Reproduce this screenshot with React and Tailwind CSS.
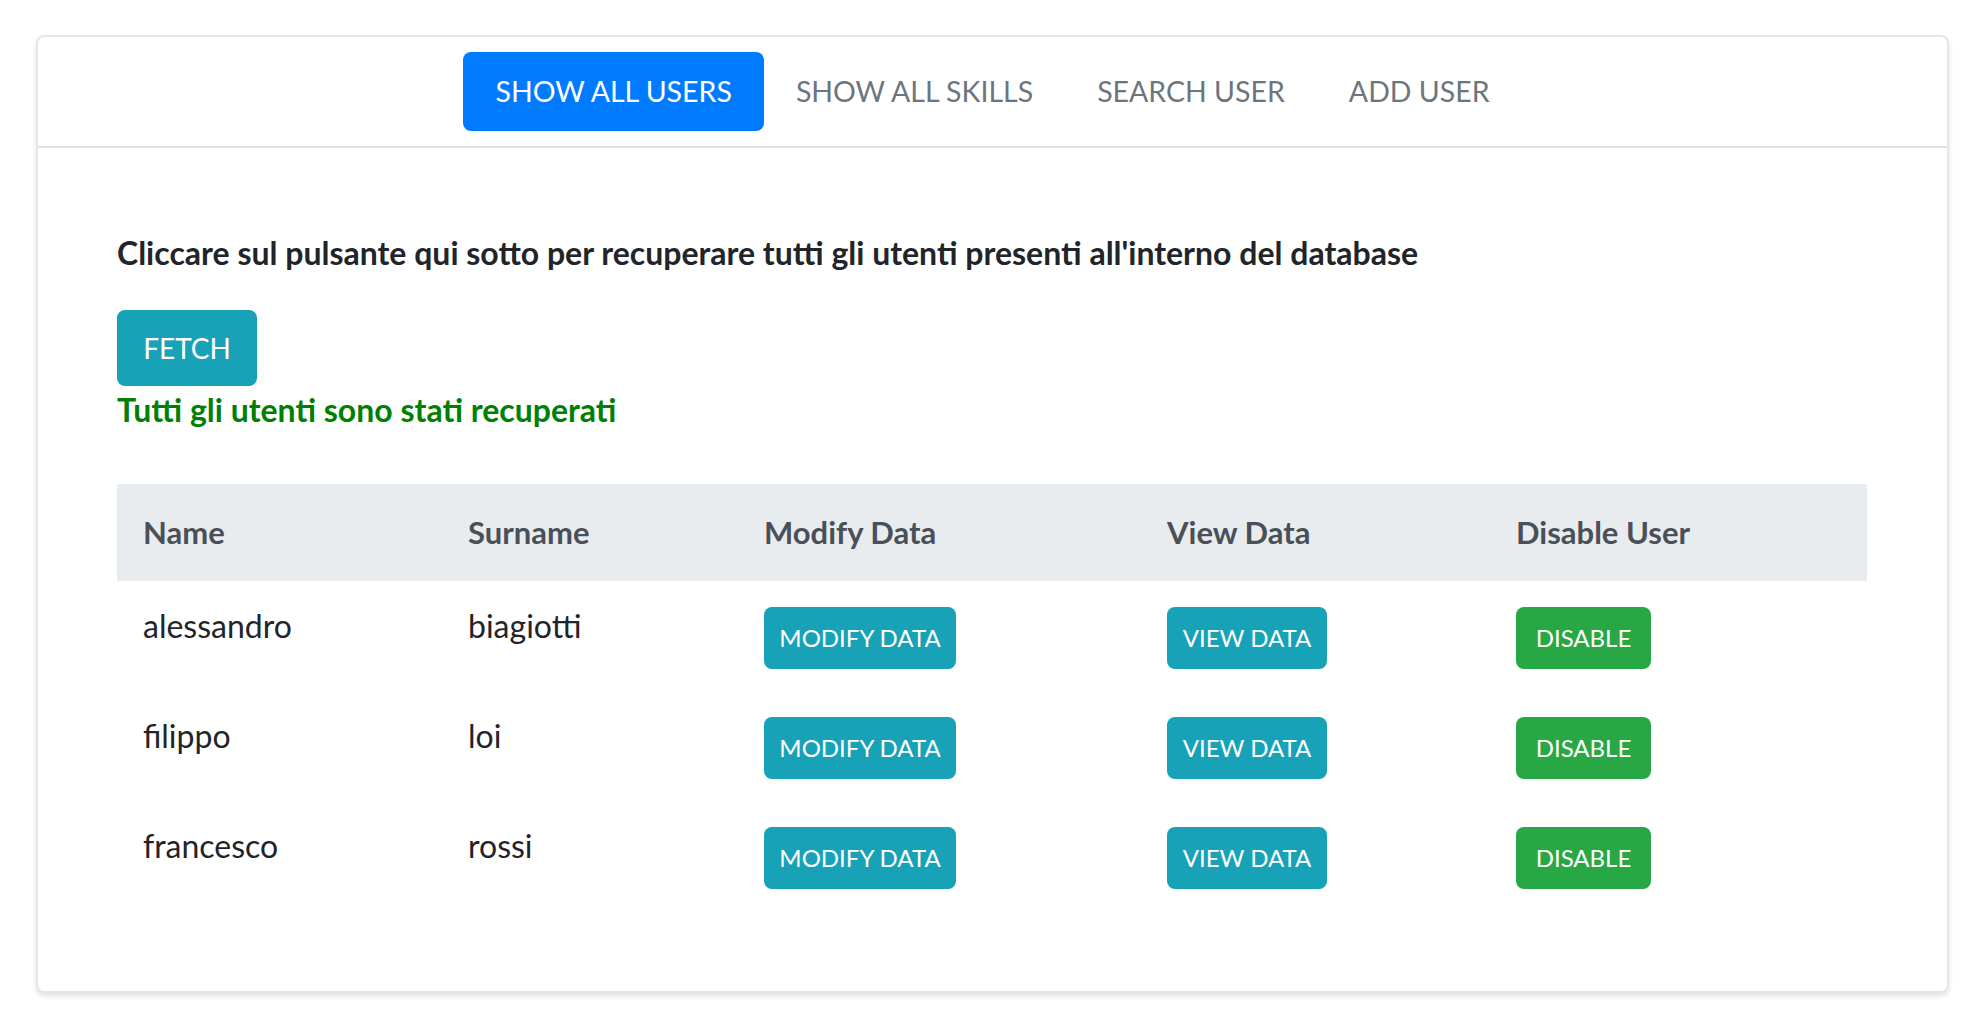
import React from 'react';

const users = [
    { name: 'alessandro', surname: 'biagiotti' },
    { name: 'filippo', surname: 'loi' },
    { name: 'francesco', surname: 'rossi' },
];

const tabs = ['SHOW ALL USERS', 'SHOW ALL SKILLS', 'SEARCH USER', 'ADD USER'];

const App = () => {
    return (
        <div className="w-full min-h-screen bg-white font-['Lato',sans-serif] text-[#212529]">
            <div className="pt-[35px] pl-[36px]">
                <div className="w-[1913px] h-[958px] border-2 border-[#e6e6e6] rounded-[8px] shadow-[0_3px_5px_rgba(0,0,0,0.12)] bg-white">
                    {/* header con i tab */}
                    <div className="flex justify-center pt-[15px] pb-[15px] border-b-2 border-[#dee2e6]">
                        <ul className="flex">
                            {tabs.map((t, i) => (
                                <li
                                    key={t}
                                    className={
                                        i === 0
                                            ? 'h-[79px] px-[32px] flex items-center rounded-[8px] bg-[#007bff] text-white text-[28.5px]'
                                            : 'h-[79px] px-[32px] flex items-center text-[#6c757d] text-[28.5px]'
                                    }
                                >
                                    {t}
                                </li>
                            ))}
                        </ul>
                    </div>

                    {/* corpo */}
                    <div className="pl-[79px] pr-[80px] pt-[81px]">
                        <p className="text-[32px] leading-[48px] font-bold">
                            Cliccare sul pulsante qui sotto per recuperare tutti gli utenti presenti all'interno del database
                        </p>
                        <button className="mt-[33px] h-[76px] w-[140px] rounded-[8px] bg-[#17a2b8] text-white text-[28px]">
                            FETCH
                        </button>
                        <p className="text-[32px] leading-[48px] font-bold text-[#008000]">Tutti gli utenti sono stati recuperati</p>

                        <table className="mt-[50px] w-[1750px] table-fixed text-left">
                            <thead>
                                <tr className="bg-[#e9ecef] text-[#495057] h-[97px]">
                                    <th className="w-[325px] px-[26px] text-[31px] font-bold">Name</th>
                                    <th className="w-[296px] px-[26px] text-[31px] font-bold">Surname</th>
                                    <th className="w-[403px] px-[26px] text-[31px] font-bold">Modify Data</th>
                                    <th className="w-[349px] px-[26px] text-[31px] font-bold">View Data</th>
                                    <th className="w-[377px] px-[26px] text-[31px] font-bold">Disable User</th>
                                </tr>
                            </thead>
                            <tbody>
                                {users.map((u) => (
                                    <tr key={u.name} className="h-[110px]">
                                        <td className="px-[26px] pt-[21px] align-top text-[32px] leading-[48px]">{u.name}</td>
                                        <td className="px-[26px] pt-[21px] align-top text-[32px] leading-[48px]">{u.surname}</td>
                                        <td className="px-[26px] pt-[26px] align-top">
                                            <button className="h-[62px] w-[192px] rounded-[8px] bg-[#17a2b8] text-white text-[24px]">MODIFY DATA</button>
                                        </td>
                                        <td className="px-[26px] pt-[26px] align-top">
                                            <button className="h-[62px] w-[160px] rounded-[8px] bg-[#17a2b8] text-white text-[24px]">VIEW DATA</button>
                                        </td>
                                        <td className="px-[26px] pt-[26px] align-top">
                                            <button className="h-[62px] w-[135px] rounded-[8px] bg-[#28a745] text-white text-[24px]">DISABLE</button>
                                        </td>
                                    </tr>
                                ))}
                            </tbody>
                        </table>
                    </div>
                </div>
            </div>
        </div>
    );
};

export default App;
